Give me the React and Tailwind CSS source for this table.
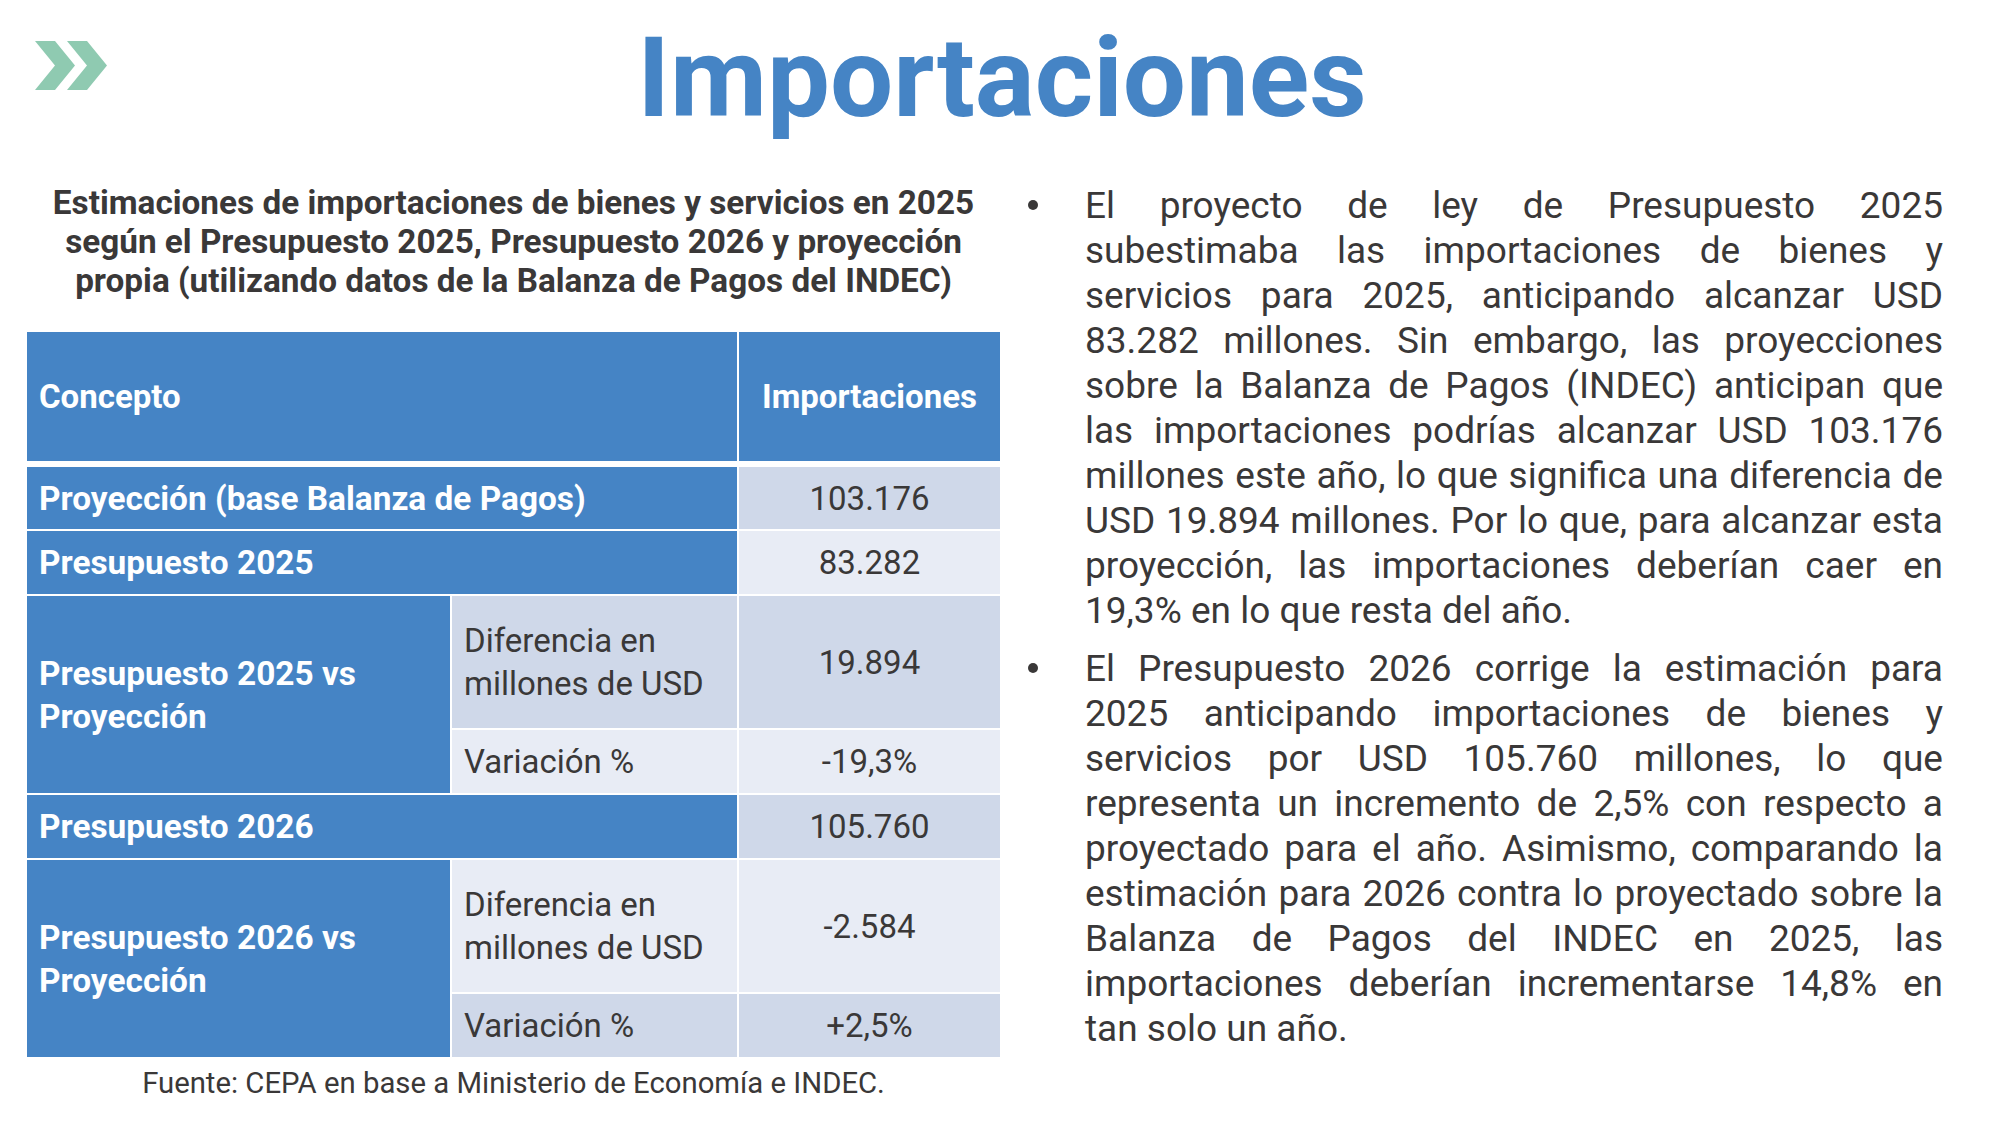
import React from "react";

const blue = "bg-[#4584c5]";

function Chevrons() {
    return (
        <svg width="72" height="49" viewBox="0 0 72 49" className="block">
            <polygon points="0,0 20,0 40,24.5 20,49 0,49 20,24.5" fill="#8fcab1" />
            <polygon points="32,0 52,0 72,24.5 52,49 32,49 52,24.5" fill="#8fcab1" />
        </svg>
    );
}

function LabelCell({ children, className = "" }) {
    return (
        <div className={`${blue} flex items-center px-[12px] font-bold text-[33.4px] text-white leading-[43px] ${className}`}>
            <div>{children}</div>
        </div>
    );
}

function SubCell({ children, dark }) {
    return (
        <div
            className={`flex items-center px-[12px] leading-[43px] text-[#3a3838] ${
                dark ? "bg-[#cfd8e9]" : "bg-[#e8ecf5]"
            }`}
        >
            <div>{children}</div>
        </div>
    );
}

function ValueCell({ children, dark }) {
    return (
        <div
            className={`flex items-center justify-center leading-[43px] text-[#3a3838] ${
                dark ? "bg-[#cfd8e9]" : "bg-[#e8ecf5]"
            }`}
        >
            {children}
        </div>
    );
}

function Bullet({ children, className = "" }) {
    return (
        <div className={`flex ${className}`}>
            <div className="w-[65px] shrink-0 pl-[8px] pt-[17px]">
                <div className="w-[10px] h-[10px] rounded-full bg-[#3a3838]"></div>
            </div>
            <p className="w-[858px] text-justify text-[37px] leading-[45px] text-[#3a3838]">
                {children}
            </p>
        </div>
    );
}

export default function App() {
    return (
        <div className="w-[2000px] h-[1125px] bg-white overflow-hidden pt-[22px] font-['Roboto',sans-serif]">
            <header className="grid grid-cols-[1fr_auto_1fr]">
                <div className="pl-[35px] pt-[19px]">
                    <Chevrons />
                </div>
                <h1 className="ml-[4px] text-[112px] leading-none font-bold text-[#4584c5]">
                    Importaciones
                </h1>
                <div></div>
            </header>

            <main className="mt-[49px] flex pl-[27px]">
                <section className="w-[973px] shrink-0">
                    <h2 className="text-center text-[33.3px] leading-[39px] font-bold text-[#3a3838]">
                        Estimaciones de importaciones de bienes y servicios en 2025
                        <br />
                        según el Presupuesto 2025, Presupuesto 2026 y proyección
                        <br />
                        propia (utilizando datos de la Balanza de Pagos del INDEC)
                    </h2>

                    <div className="mt-[32px] text-[33px]">
                        <div className="grid grid-cols-[710px_261px] grid-rows-[129px] gap-[2px] font-bold text-white">
                            <div className={`${blue} flex items-center px-[12px]`}>Concepto</div>
                            <div className={`${blue} flex items-center justify-center`}>Importaciones</div>
                        </div>
                        <div className="mt-[6px] grid grid-cols-[423px_285px_261px] grid-rows-[62px_63px_132px_63px_63px_132px_63px] gap-[2px]">
                            <LabelCell className="col-span-2">Proyección (base Balanza de Pagos)</LabelCell>
                            <ValueCell dark>103.176</ValueCell>

                            <LabelCell className="col-span-2">Presupuesto 2025</LabelCell>
                            <ValueCell>83.282</ValueCell>

                            <LabelCell className="row-span-2">
                                Presupuesto 2025 vs
                                <br />
                                Proyección
                            </LabelCell>
                            <SubCell dark>
                                Diferencia en
                                <br />
                                millones de USD
                            </SubCell>
                            <ValueCell dark>19.894</ValueCell>
                            <SubCell>Variación %</SubCell>
                            <ValueCell>-19,3%</ValueCell>

                            <LabelCell className="col-span-2">Presupuesto 2026</LabelCell>
                            <ValueCell dark>105.760</ValueCell>

                            <LabelCell className="row-span-2">
                                Presupuesto 2026 vs
                                <br />
                                Proyección
                            </LabelCell>
                            <SubCell>
                                Diferencia en
                                <br />
                                millones de USD
                            </SubCell>
                            <ValueCell>-2.584</ValueCell>
                            <SubCell dark>Variación %</SubCell>
                            <ValueCell dark>+2,5%</ValueCell>
                        </div>
                    </div>

                    <p className="mt-[9px] text-center text-[29.3px] leading-[34px] text-[#3a3838]">
                        Fuente: CEPA en base a Ministerio de Economía e INDEC.
                    </p>
                </section>

                <section className="ml-[20px]">
                    <Bullet>
                        El proyecto de ley de Presupuesto 2025 subestimaba las importaciones de
                        bienes y servicios para 2025, anticipando alcanzar USD 83.282 millones. Sin
                        embargo, las proyecciones sobre la Balanza de Pagos (INDEC) anticipan que
                        las importaciones podrías alcanzar USD 103.176 millones este año, lo que
                        significa una diferencia de USD 19.894 millones. Por lo que, para alcanzar
                        esta proyección, las importaciones deberían caer en 19,3% en lo que resta
                        del año.
                    </Bullet>
                    <Bullet className="mt-[13px]">
                        El Presupuesto 2026 corrige la estimación para 2025 anticipando
                        importaciones de bienes y servicios por USD 105.760 millones, lo que
                        representa un incremento de 2,5% con respecto a proyectado para el año.
                        Asimismo, comparando la estimación para 2026 contra lo proyectado sobre la
                        Balanza de Pagos del INDEC en 2025, las importaciones deberían
                        incrementarse 14,8% en tan{"\u00A0"}solo un año.
                    </Bullet>
                </section>
            </main>
        </div>
    );
}
